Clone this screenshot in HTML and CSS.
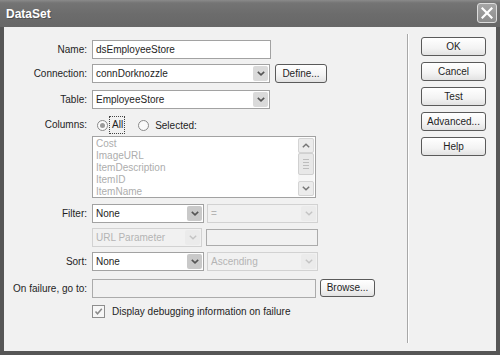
FILE: index.html
```html
<!DOCTYPE html>
<html>
<head>
<meta charset="utf-8">
<link rel="stylesheet" href="styles.css">
</head>
<body>
<div class="window">
  <div class="titlebar">
    <span class="title">DataSet</span>
    <span class="close"><svg width="12" height="12" viewBox="0 0 12 12"><path d="M1.5 1.5 L10.5 10.5 M10.5 1.5 L1.5 10.5" stroke="#fff" stroke-width="2.2" stroke-linecap="square"/></svg></span>
  </div>
  <div class="client">
    <div class="form">
      <div class="lbl">Name:</div>
      <div class="ctl"><div class="input w179">dsEmployeeStore</div></div>

      <div class="lbl">Connection:</div>
      <div class="ctl">
        <div class="select w178"><span class="val">connDorknozzle</span><span class="arrow"><svg width="8" height="5" viewBox="0 0 8 5"><path d="M0.8 0.8 L4 3.8 L7.2 0.8" fill="none" stroke="#555" stroke-width="1.6"/></svg></span></div>
        <div class="btn define">Define...</div>
      </div>

      <div class="lbl">Table:</div>
      <div class="ctl">
        <div class="select w178"><span class="val">EmployeeStore</span><span class="arrow"><svg width="8" height="5" viewBox="0 0 8 5"><path d="M0.8 0.8 L4 3.8 L7.2 0.8" fill="none" stroke="#555" stroke-width="1.6"/></svg></span></div>
      </div>

      <div class="lbl lbl-cols">Columns:</div>
      <div class="ctl cols">
        <span class="radio on"><span class="dot"></span></span>
        <span class="focus">All</span>
        <span class="radio second"></span>
        <span class="rtext">Selected:</span>
      </div>

      <div class="lbl"></div>
      <div class="ctl">
        <div class="list">
          <div class="items">
            <div>Cost</div>
            <div>ImageURL</div>
            <div>ItemDescription</div>
            <div>ItemID</div>
            <div>ItemName</div>
          </div>
          <div class="scroll">
            <div class="sbtn"><svg width="8" height="5" viewBox="0 0 8 5"><path d="M0.8 4.2 L4 1.2 L7.2 4.2" fill="none" stroke="#777" stroke-width="1.5"/></svg></div>
            <div class="thumb"><span></span><span></span><span></span><span></span></div>
            <div class="track"></div>
            <div class="sbtn"><svg width="8" height="5" viewBox="0 0 8 5"><path d="M0.8 0.8 L4 3.8 L7.2 0.8" fill="none" stroke="#777" stroke-width="1.5"/></svg></div>
          </div>
        </div>
      </div>

      <div class="lbl">Filter:</div>
      <div class="ctl gap3">
        <div class="select w112"><span class="val">None</span><span class="arrow dark"><svg width="8" height="5" viewBox="0 0 8 5"><path d="M0.8 0.8 L4 3.8 L7.2 0.8" fill="none" stroke="#555" stroke-width="1.6"/></svg></span></div>
        <div class="select dis w111"><span class="val">=</span><span class="arrow"><svg width="8" height="5" viewBox="0 0 8 5"><path d="M0.8 0.8 L4 3.8 L7.2 0.8" fill="none" stroke="#c4c4c4" stroke-width="1.4"/></svg></span></div>
      </div>

      <div class="lbl"></div>
      <div class="ctl gap4">
        <div class="select dis w110"><span class="val">URL Parameter</span><span class="arrow"><svg width="8" height="5" viewBox="0 0 8 5"><path d="M0.8 0.8 L4 3.8 L7.2 0.8" fill="none" stroke="#c4c4c4" stroke-width="1.4"/></svg></span></div>
        <div class="input dis w112 h17"></div>
      </div>

      <div class="lbl">Sort:</div>
      <div class="ctl gap3">
        <div class="select w112"><span class="val">None</span><span class="arrow dark"><svg width="8" height="5" viewBox="0 0 8 5"><path d="M0.8 0.8 L4 3.8 L7.2 0.8" fill="none" stroke="#555" stroke-width="1.6"/></svg></span></div>
        <div class="select dis w111"><span class="val">Ascending</span><span class="arrow"><svg width="8" height="5" viewBox="0 0 8 5"><path d="M0.8 0.8 L4 3.8 L7.2 0.8" fill="none" stroke="#c4c4c4" stroke-width="1.4"/></svg></span></div>
      </div>

      <div class="lbl">On failure, go to:</div>
      <div class="ctl gap4">
        <div class="input dis w224"></div>
        <div class="btn browse">Browse...</div>
      </div>

      <div class="lbl"></div>
      <div class="ctl check">
        <span class="cbox"><svg width="9" height="9" viewBox="0 0 9 9"><path d="M1.5 4.5 L3.5 6.8 L7.8 1.8" fill="none" stroke="#8a8a8a" stroke-width="1.5"/></svg></span>
        <span>Display debugging information on failure</span>
      </div>
    </div>
    <div class="sep"></div>
    <div class="buttons">
      <div class="btn side">OK</div>
      <div class="btn side">Cancel</div>
      <div class="btn side">Test</div>
      <div class="btn side">Advanced...</div>
      <div class="btn side">Help</div>
    </div>
  </div>
</div>
</body>
</html>
```

FILE: styles.css
```css
* { box-sizing: border-box; }
html, body { margin: 0; padding: 0; }
body {
  font-family: "Liberation Sans", Arial, sans-serif;
  font-size: 10px;
  color: #1e1e1e;
  background: #fff;
}
.window {
  width: 500px;
  height: 355px;
  background: #565656;
  display: flex;
  flex-direction: column;
}
.titlebar {
  height: 27px;
  flex: none;
  display: flex;
  align-items: center;
  justify-content: space-between;
  padding: 0 3px 0 6px;
  background: linear-gradient(#8a8a8a 0px, #747474 3px, #6c6c6c 14px, #676767 27px);
}
.title {
  color: #fff;
  font-weight: bold;
  font-size: 12px;
  text-shadow: 1px 1px 0 #505050;
}
.close {
  width: 20px;
  height: 20px;
  border: 1px solid #dcdcdc;
  border-radius: 3px;
  background: linear-gradient(#a6a6a6, #8c8c8c);
  display: flex;
  align-items: center;
  justify-content: center;
  margin-top: -1px;
}
.client {
  flex: 1;
  margin: 0 4px 4px;
  background: #f1f1f1;
  display: flex;
}
.form {
  width: 403px;
  flex: none;
  padding: 13px 0 0 9px;
  display: grid;
  grid-template-columns: 75px auto;
  grid-template-rows: 24px 26px 24px 22px 68px 24px 24px 27px 26px 14px;
  column-gap: 4px;
  align-content: start;
}
.lbl {
  text-align: right;
  height: 19px;
  line-height: 19px;
  padding-right: 1px;
  white-space: nowrap;
}
.lbl-cols { height: 22px; line-height: 22px; }
.ctl {
  display: flex;
  align-items: flex-start;
}
.gap3 { gap: 3px; }
.gap4 { gap: 4px; }
.input {
  height: 19px;
  border: 1px solid #a2a2a2;
  background: #fff;
  line-height: 17px;
  padding-left: 3px;
}
.input.dis { border-color: #ababab; background: #f1f1f1; }
.h17 { height: 17px; margin-top: 1px; }
.w179 { width: 179px; }
.w178 { width: 178px; }
.w112 { width: 112px; }
.w111 { width: 111px; }
.w110 { width: 110px; }
.w224 { width: 224px; }
.select {
  height: 19px;
  border: 1px solid #a2a2a2;
  background: #fff;
  display: flex;
}
.select .val {
  flex: 1;
  padding-left: 3px;
  line-height: 17px;
  white-space: nowrap;
  overflow: hidden;
}
.select .arrow {
  width: 15px;
  height: 15px;
  margin: 1px;
  background: #dadada;
  border-radius: 2px;
  display: flex;
  align-items: center;
  justify-content: center;
}
.select .arrow.dark { background: #c9c9c9; }
.select.dis {
  border-color: #d2d2d2;
  background: #f1f1f1;
  color: #b4b4b4;
}
.select.dis .arrow { background: #ebebeb; }
.btn {
  height: 19px;
  border: 1px solid #5a5a5a;
  border-radius: 3px;
  background: linear-gradient(#ffffff, #f3f3f3 60%, #e2e2e2);
  text-align: center;
  line-height: 17px;
}
.define { width: 52px; margin-left: 5px; }
.browse { width: 55px; height: 18px; line-height: 16px; }
.cols {
  height: 22px;
  align-items: center;
}
.radio {
  width: 11px;
  height: 11px;
  border: 1px solid #8a8a8a;
  border-radius: 50%;
  background: #fafafa;
  display: flex;
  align-items: center;
  justify-content: center;
  margin-left: 5px;
}
.radio .dot {
  width: 5px;
  height: 5px;
  border-radius: 50%;
  background: #9a9a9a;
}
.radio.second { margin-left: 13px; }
.focus {
  margin-left: 1px;
  padding: 2px 1px 2px 2px;
  border: 1px dotted #444;
  line-height: 12px;
}
.rtext { margin-left: 6px; }
.list {
  width: 224px;
  height: 62px;
  border: 1px solid #a2a2a2;
  background: #fff;
  display: flex;
}
.items {
  flex: 1;
  padding: 1px 0 0 3px;
  color: #adadad;
  line-height: 12px;
}
.scroll {
  width: 16px;
  margin: 1px 1px 1px 0;
  display: flex;
  flex-direction: column;
  background: #f6f6f6;
}
.sbtn {
  height: 15px;
  border: 1px solid #d4d4d4;
  border-radius: 2px;
  background: #ececec;
  display: flex;
  align-items: center;
  justify-content: center;
}
.thumb {
  height: 22px;
  border: 1px solid #d0d0d0;
  border-radius: 2px;
  background: #e8e8e8;
  display: flex;
  flex-direction: column;
  align-items: center;
  justify-content: center;
  gap: 2px;
}
.thumb span {
  width: 6px;
  height: 1px;
  background: #bdbdbd;
}
.track { flex: 1; }
.check {
  align-items: center;
  height: 13px;
}
.cbox {
  width: 13px;
  height: 13px;
  border: 1px solid #8e8e8e;
  background: #f7f7f7;
  display: flex;
  align-items: center;
  justify-content: center;
  margin-right: 7px;
}
.sep {
  width: 2px;
  margin: 7px 0 8px;
  border-left: 1px solid #a8a8a8;
  border-right: 1px solid #ffffff;
}
.buttons {
  padding: 10px 0 0 12px;
  display: flex;
  flex-direction: column;
  gap: 6px;
}
.side { width: 65px; }
```
